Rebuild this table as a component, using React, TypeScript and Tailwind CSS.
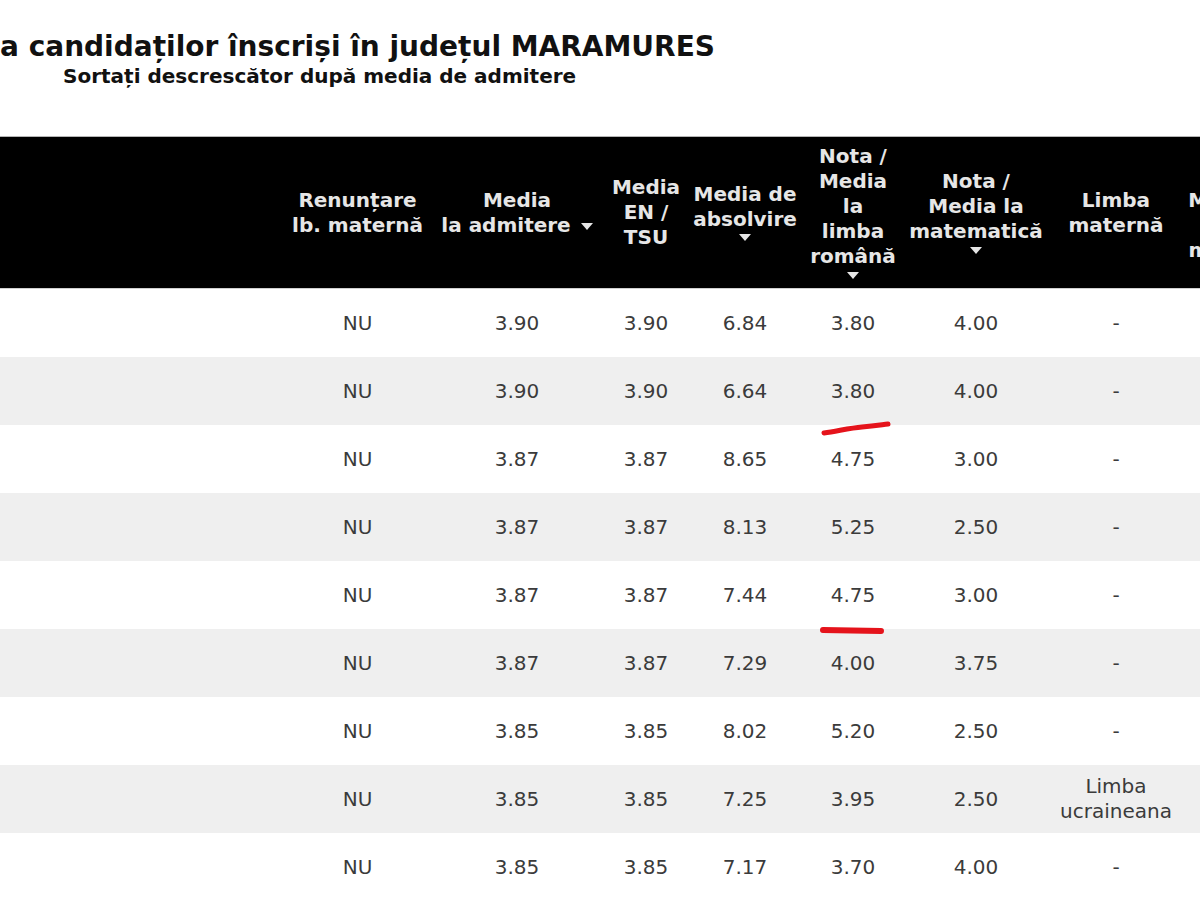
import React from "react";

type HeadCell = { lines: string[]; arrow?: "block" | "inline" };

const heads: HeadCell[] = [
  { lines: [] },
  { lines: ["Renunțare", "lb. maternă"] },
  { lines: ["Media", "la admitere"], arrow: "inline" },
  { lines: ["Media", "EN /", "TSU"] },
  { lines: ["Media de", "absolvire"], arrow: "block" },
  { lines: ["Nota /", "Media", "la", "limba", "română"], arrow: "block" },
  { lines: ["Nota /", "Media la", "matematică"], arrow: "block" },
  { lines: ["Limba", "maternă"] },
  { lines: ["Nota /", "Media la", "limba", "maternă"] },
];

const rows: string[][] = [
  ["NU", "3.90", "3.90", "6.84", "3.80", "4.00", "-"],
  ["NU", "3.90", "3.90", "6.64", "3.80", "4.00", "-"],
  ["NU", "3.87", "3.87", "8.65", "4.75", "3.00", "-"],
  ["NU", "3.87", "3.87", "8.13", "5.25", "2.50", "-"],
  ["NU", "3.87", "3.87", "7.44", "4.75", "3.00", "-"],
  ["NU", "3.87", "3.87", "7.29", "4.00", "3.75", "-"],
  ["NU", "3.85", "3.85", "8.02", "5.20", "2.50", "-"],
  ["NU", "3.85", "3.85", "7.25", "3.95", "2.50", "Limba\nucraineana"],
  ["NU", "3.85", "3.85", "7.17", "3.70", "4.00", "-"],
];

const cols = "grid grid-cols-[287px_141px_178px_80px_118px_98px_148px_132px_108px]";

function Arrow() {
  return (
    <span className="inline-block w-0 h-0 border-x-[6px] border-t-[7px] border-x-transparent border-t-[#e6e6e6]" />
  );
}

function HeaderCell({ cell }: { cell: HeadCell }) {
  return (
    <div className="flex flex-col items-center justify-center text-center px-1">
      {cell.lines.map((line, i) => {
        const last = i === cell.lines.length - 1;
        return (
          <div key={i} className="leading-[25px] whitespace-nowrap">
            {line}
            {last && cell.arrow === "inline" && (
              <span className="ml-[10px] inline-flex align-middle">
                <Arrow />
              </span>
            )}
          </div>
        );
      })}
      {cell.arrow === "block" && (
        <div className="h-[12px] flex items-center justify-center">
          <Arrow />
        </div>
      )}
    </div>
  );
}

export default function App() {
  return (
    <div className="relative w-[1200px] h-[900px] overflow-hidden bg-white font-['DejaVu_Sans',Verdana,sans-serif]">
      <div className="pt-[30px]">
        <h1 className="text-[28px] leading-[34px] font-bold text-[#111] whitespace-nowrap">
          a candidaților înscriși în județul MARAMURES
        </h1>
        <p className="pl-[63px] text-[20px] leading-[24px] font-bold text-[#111] whitespace-nowrap">
          Sortați descrescător după media de admitere
        </p>
      </div>

      <div className="mt-[48px] w-[1290px]">
        <div className={`${cols} h-[153px] bg-black border-t border-t-[#b5b5b5] border-b border-b-[#d0d0d0] text-[20px] font-bold text-[#e6e6e6]`}>
          {heads.map((h, i) => (
            <HeaderCell key={i} cell={h} />
          ))}
        </div>

        {rows.map((r, ri) => (
          <div
            key={ri}
            className={`${cols} h-[68px] text-[20px] text-[#3b3b3b] ${ri % 2 === 1 ? "bg-[#efefef]" : "bg-white"}`}
          >
            <div />
            {r.map((v, ci) => (
              <div key={ci} className="flex flex-col items-center justify-center text-center">
                {v.split("\n").map((line, li) => (
                  <span key={li} className="leading-[25px] whitespace-nowrap">
                    {line}
                  </span>
                ))}
              </div>
            ))}
            <div />
          </div>
        ))}
      </div>

      {/* red pen marks drawn over the screenshot */}
      <svg className="absolute left-0 top-0 pointer-events-none" width="1200" height="900">
        <path
          d="M824 433 C 838 431, 850 428, 862 427 S 880 425, 888 424"
          stroke="#e5131b"
          strokeWidth="5"
          strokeLinecap="round"
          fill="none"
        />
        <path d="M823 630 L 881 631" stroke="#e5131b" strokeWidth="6" strokeLinecap="round" fill="none" />
      </svg>
    </div>
  );
}
